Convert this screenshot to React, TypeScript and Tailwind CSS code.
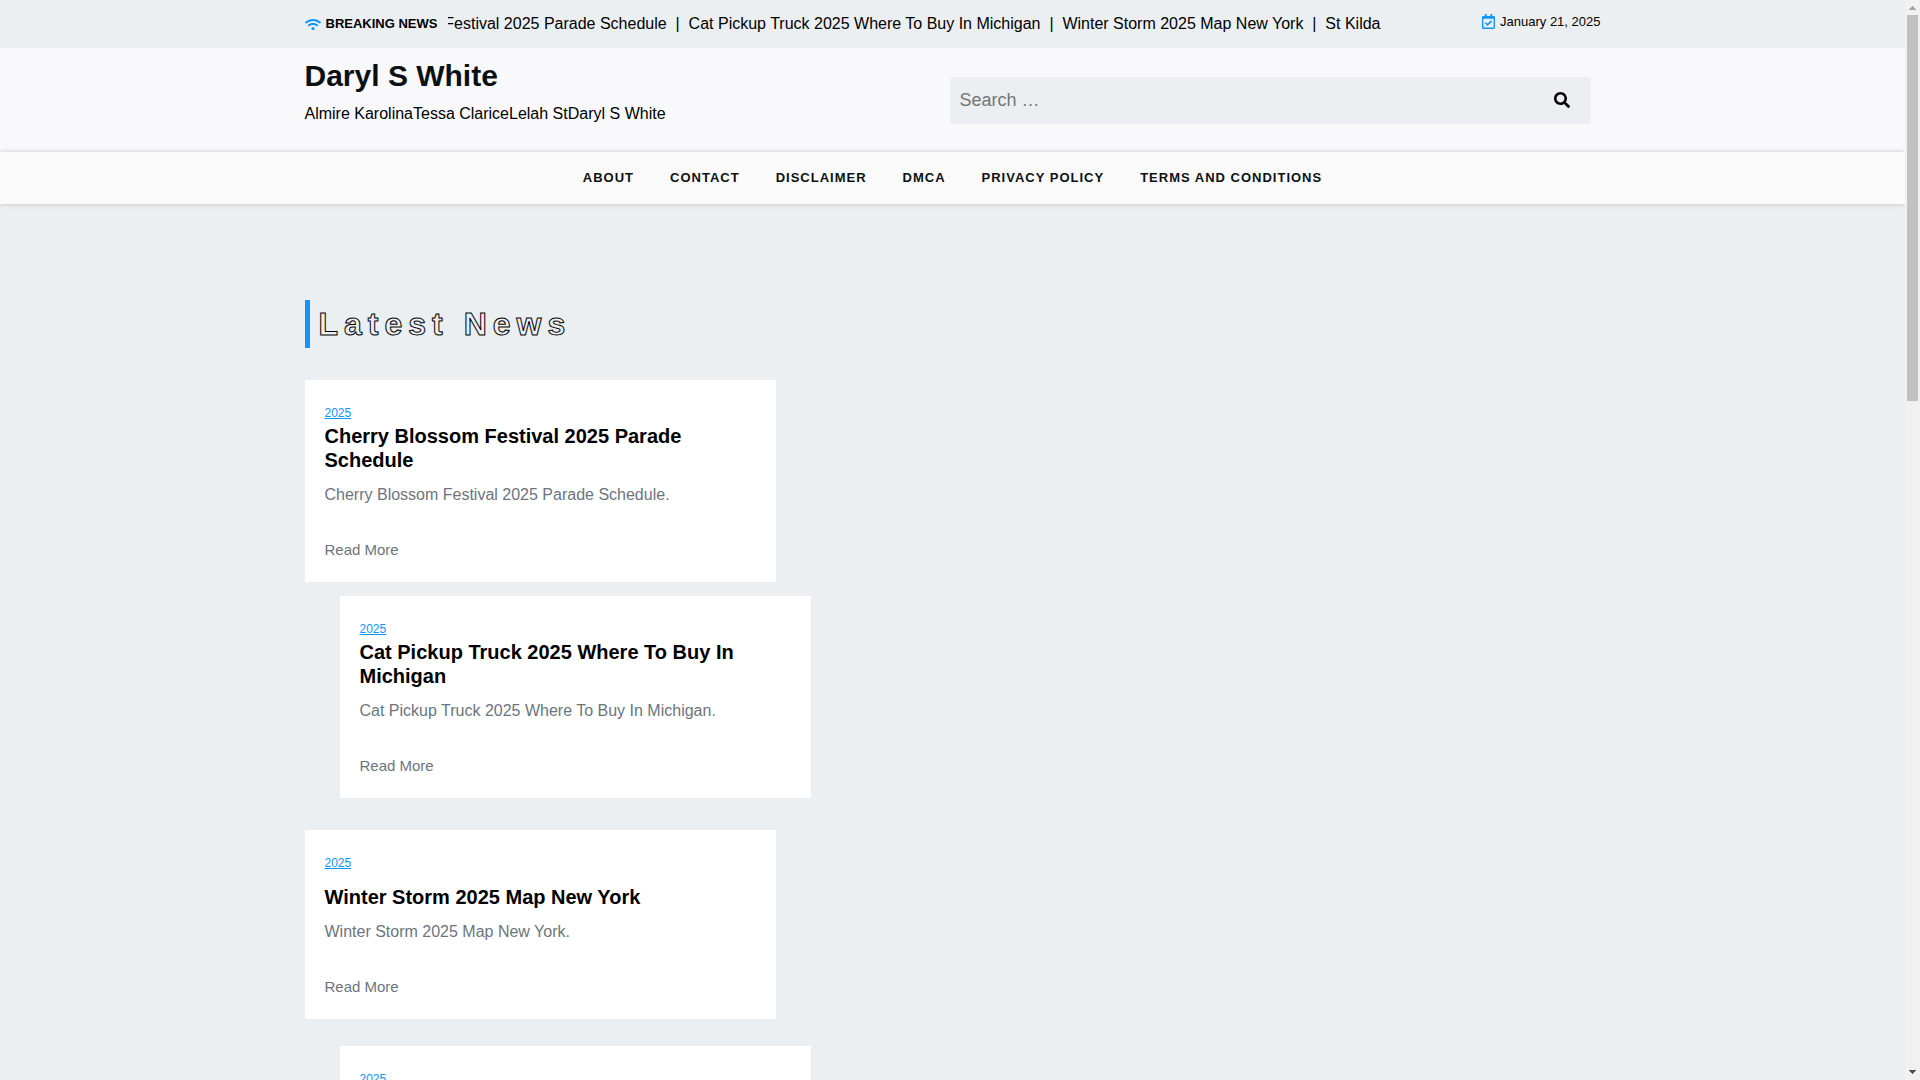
import { FaRegCalendarCheck, FaSearch, FaWifi } from "react-icons/fa";

interface Post {
    title: string,
    category: string,
    cardClass: string,
    titleClass: string
}

const posts: Post[] = [
    { title: 'Cherry Blossom Festival 2025 Parade Schedule', category: '2025', cardClass: '', titleClass: '' },
    { title: 'Cat Pickup Truck 2025 Where To Buy In Michigan', category: '2025', cardClass: 'mt-[14px] ml-[35px]', titleClass: '' },
    { title: 'Winter Storm 2025 Map New York', category: '2025', cardClass: 'mt-8', titleClass: 'pt-[11px]' },
    { title: 'St Kilda', category: '2025', cardClass: 'mt-[27px] ml-[35px]', titleClass: 'pt-[11px]' },
];

const headlines: string[] = [
    'Festival 2025 Parade Schedule',
    'Cat Pickup Truck 2025 Where To Buy In Michigan',
    'Winter Storm 2025 Map New York',
    'St Kilda',
];

const menu: string[] = ['About', 'Contact', 'Disclaimer', 'DMCA', 'Privacy Policy', 'Terms and Conditions'];

const container: string = "mx-auto w-full max-w-[1320px]";

const TopBar = () => (
    <div className={`${container} grid grid-cols-12 h-12`}>
        <div className="col-span-10 px-3 flex items-center min-w-0">
            <FaWifi className="w-4 h-[13px] shrink-0 text-[#0d96ff]" />
            <strong className="ml-[5px] mr-[11px] shrink-0 text-[13px] leading-6">BREAKING NEWS</strong>
            <div className="flex flex-1 justify-end overflow-hidden min-w-0 whitespace-nowrap leading-6">
                {headlines.map((headline, i) => (
                    <span key={headline} className="shrink-0">
                        <a href="#">{headline}</a>
                        {i < headlines.length - 1 && <span className="whitespace-pre">{'  |  '}</span>}
                    </span>
                ))}
            </div>
        </div>
        <div className="col-span-2 px-3 pt-[10px] flex items-start justify-end gap-[5px] text-[13px] leading-6">
            <FaRegCalendarCheck className="mt-1 w-[13px] h-[15px] text-[#0d96ff]" />
            <span>January 21, 2025</span>
        </div>
    </div>
);

const Header = () => (
    <header className="bg-[#f9f9fc]">
        <div className={`${container} px-3 flex flex-wrap items-center justify-between`}>
            <div className="pt-[10px] pb-[26px]">
                <h1 className="text-[30px] leading-9 font-bold text-[#0c1013]"><a href="#">Daryl S White</a></h1>
                <p className="mt-2 leading-6">Almire KarolinaTessa ClariceLelah StDaryl S White</p>
            </div>
            <form className="flex mr-[10px] w-[641px] max-w-full h-[47px] rounded bg-[#ebeff2]" onSubmit={(e) => e.preventDefault()}>
                <input type="search" aria-label="Search" placeholder="Search …"
                    className="flex-1 min-w-0 px-[10px] text-lg bg-transparent outline-none placeholder:text-[#757575]" />
                <button type="submit" aria-label="Search" className="px-[21px] cursor-pointer">
                    <FaSearch className="w-4 h-4" />
                </button>
            </form>
        </div>
    </header>
);

const Card = ({ post }: { post: Post }) => (
    <article className={`w-[471px] max-w-full bg-white px-5 pt-[22px] pb-5 ${post.cardClass}`}>
        <div className="flex text-xs leading-[22px]">
            <a href="#" className="underline text-[#0d96ff]">{post.category}</a>
        </div>
        <h3 className={`text-xl leading-6 font-bold ${post.titleClass}`}><a href="#">{post.title}</a></h3>
        <p className="mt-[11px] leading-6 text-[#6c757d]">{post.title}.</p>
        <div className="mt-[31px] flex text-[15px] leading-6">
            <a href="#" className="text-[#6c757d]">Read More</a>
        </div>
    </article>
);

const ScrollBar = () => (
    <div className="w-[15px] shrink-0 bg-[#f1f1f1] flex flex-col items-center">
        <svg className="w-[15px] h-[15px] shrink-0" viewBox="0 0 15 15" shapeRendering="crispEdges">
            <path d="M7 6h1v1h1v1h1v1h1v1H4V9h1V8h1V7h1z" fill="#a3a3a3" />
        </svg>
        <div className="w-[11px] h-[386px] bg-[#c1c1c1]" />
        <svg className="mt-auto w-[15px] h-[15px] shrink-0" viewBox="0 0 15 15" shapeRendering="crispEdges">
            <path d="M4 5h7v1h-1v1H9v1H8v1H7V8H6V7H5V6H4z" fill="#505050" />
        </svg>
    </div>
);

const App = () => {
    return (
        <div className="flex h-screen overflow-hidden bg-[#ebeff2] text-black font-['Liberation_Sans',Arial,sans-serif]">
            <div className="flex-1 min-w-0 overflow-y-auto [scrollbar-width:none]">
                <TopBar />
                <Header />
                <nav className="relative bg-[#fafafa] shadow-[0_0_5px_rgba(0,0,0,0.2)]">
                    <ul className="flex flex-wrap justify-center">
                        {menu.map((item) => (
                            <li key={item}>
                                <a href="#" className="block px-[18px] py-[14px] text-[13px] leading-6 font-bold tracking-[1px] uppercase text-[#0c1013]">{item}</a>
                            </li>
                        ))}
                    </ul>
                </nav>
                <main className={`${container} px-3 pt-24 pb-16`}>
                    <h2 className="mb-8 pl-[9px] border-l-5 border-[#0d96ff] text-[32px] leading-[48px] font-bold tracking-[6px] text-transparent [-webkit-text-stroke:1px_#000]">Latest News</h2>
                    {posts.map((post) => <Card key={post.title} post={post} />)}
                </main>
            </div>
            <ScrollBar />
        </div>
    )
}

export default App
